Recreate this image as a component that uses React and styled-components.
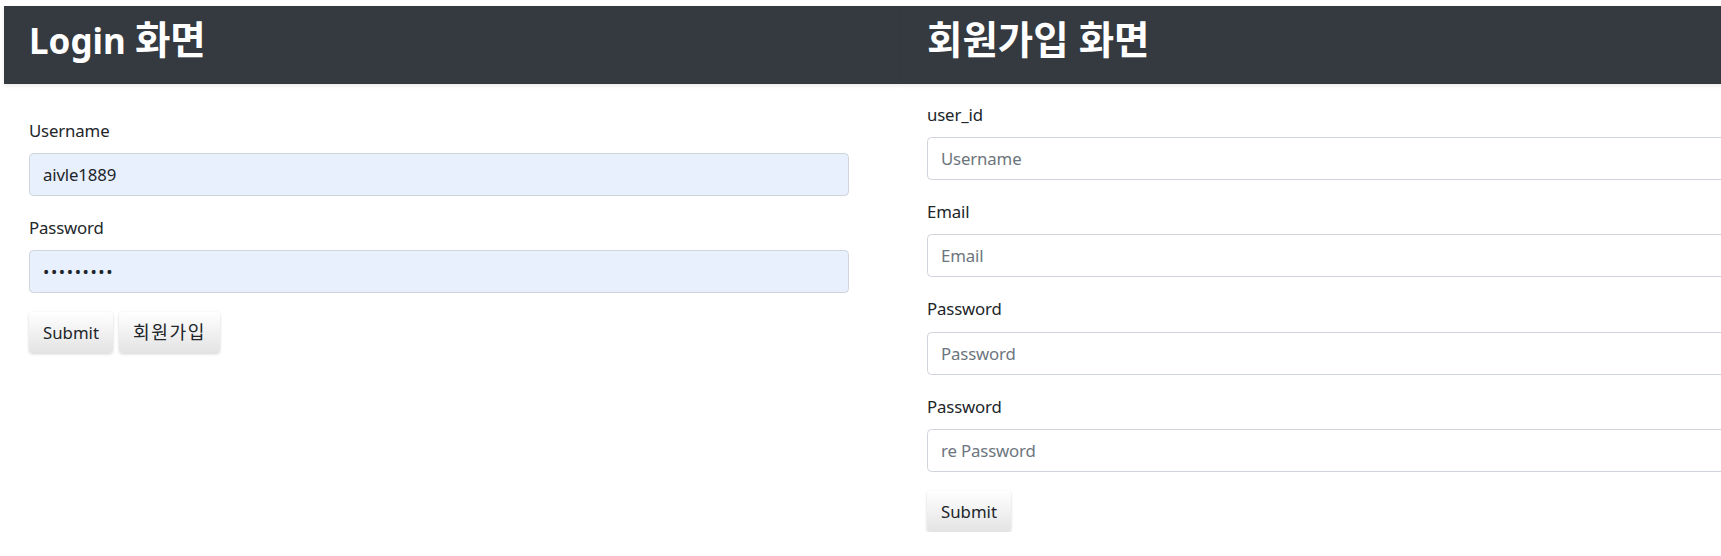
import React from "react";
import styled, { createGlobalStyle } from "styled-components";

const GlobalStyle = createGlobalStyle`
  * {
    box-sizing: border-box;
  }
  body {
    margin: 0;
    overflow: hidden;
    background: #ffffff;
    font-family: "Noto Sans", "Noto Sans CJK KR", sans-serif;
    color: #212529;
  }
`;

const Page = styled.div`
  display: flex;
  margin: 6px 0 0 4px;
  width: max-content;
`;

const Column = styled.section`
  flex: 0 0 898px;
  width: 898px;
`;

const Header = styled.header`
  display: flex;
  align-items: flex-start;
  height: 78px;
  padding: 14px 25px 0;
  background: #343a40;
  box-shadow: 0 2px 4px rgba(0, 0, 0, 0.08);
`;

const Title = styled.h2`
  margin: 0;
  font-size: 35px;
  line-height: 42px;
  font-weight: 700;
  color: #ffffff;
  font-family: "Noto Sans", "Noto Sans CJK KR", sans-serif;
`;

// hangul in the original renders a little larger than the latin text
const Hangul = styled.span`
  font-size: ${(p) => p.$scale || 1.1}em;
  line-height: 1;
  letter-spacing: ${(p) => p.$track || 0}px;
`;

const Form = styled.form`
  padding: ${(p) => p.$top}px 25px 0;
`;

const Group = styled.div`
  margin-bottom: 19px;
`;

const Label = styled.label`
  display: block;
  font-size: 16.8px;
  line-height: 26.4px;
  margin-bottom: 8.8px;
  letter-spacing: -0.15px;
  color: #212529;
`;

const Input = styled.input`
  display: block;
  width: 820px;
  height: 43px;
  padding: 0 13px;
  font-family: "Noto Sans", "Noto Sans CJK KR", sans-serif;
  font-size: 16.8px;
  letter-spacing: ${(p) => (p.$dots ? "1.6px" : "-0.15px")};
  color: #212529;
  background: ${(p) => (p.$filled ? "#e8f0fe" : "#ffffff")};
  border: 1px solid #ced4da;
  border-radius: 4.4px;
  outline: none;

  &::placeholder {
    color: #6c757d;
  }
`;

const Buttons = styled.div`
  display: flex;
  gap: 6px;
`;

const Button = styled.button`
  height: 41px;
  padding: 0 14px;
  font-family: "Noto Sans", "Noto Sans CJK KR", sans-serif;
  font-size: 16.8px;
  color: #212529;
  background: linear-gradient(to bottom, #ffffff 0%, #e3e3e3 100%);
  border: none;
  border-radius: 4px;
  box-shadow: 0 1px 3px rgba(0, 0, 0, 0.18);
  cursor: pointer;
`;

const loginFields = [
  { label: "Username", type: "text", value: "aivle1889" },
  { label: "Password", type: "password", value: "aivle1889" },
];

const signupFields = [
  { label: "user_id", type: "text", placeholder: "Username" },
  { label: "Email", type: "email", placeholder: "Email" },
  { label: "Password", type: "password", placeholder: "Password" },
  { label: "Password", type: "password", placeholder: "re Password" },
];

const App = () => {
  return (
    <>
      <GlobalStyle />
      <Page>
        <Column>
          <Header>
            <Title>
              Login <Hangul>화면</Hangul>
            </Title>
          </Header>
          <Form $top={34} onSubmit={(e) => e.preventDefault()}>
            {loginFields.map((f, i) => (
              <Group key={i}>
                <Label>{f.label}</Label>
                <Input
                  $filled
                  $dots={f.type === "password"}
                  type={f.type}
                  defaultValue={f.value}
                />
              </Group>
            ))}
            <Buttons>
              <Button type="submit">Submit</Button>
              <Button type="button">
                <Hangul $scale={1.08} $track={1.6}>회원가입</Hangul>
              </Button>
            </Buttons>
          </Form>
        </Column>

        <Column>
          <Header>
            <Title>
              <Hangul>회원가입 화면</Hangul>
            </Title>
          </Header>
          <Form $top={18} onSubmit={(e) => e.preventDefault()}>
            {signupFields.map((f, i) => (
              <Group key={i}>
                <Label>{f.label}</Label>
                <Input type={f.type} placeholder={f.placeholder} />
              </Group>
            ))}
            <Buttons>
              <Button type="submit">Submit</Button>
            </Buttons>
          </Form>
        </Column>
      </Page>
    </>
  );
};

export default App;
